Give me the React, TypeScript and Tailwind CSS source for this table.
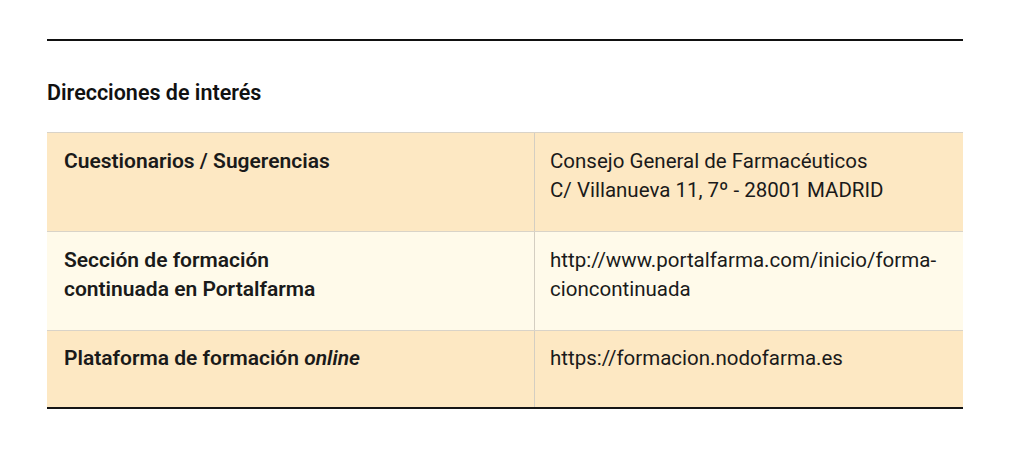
import React from "react";

const font = { fontFamily: "Roboto, 'Noto Sans', sans-serif" };

export default function App() {
  return (
    <div className="w-[1024px] h-[464px] bg-white" style={font}>
      <div className="pt-[39px] px-[47px] w-[1010px]">
        <div className="w-[916px] h-[2px] bg-[#111]" />
        <h2 className="mt-[39px] h-[26px] text-[21.5px] leading-[26px] font-semibold text-[#111]">
          Direcciones de interés
        </h2>
        <div className="mt-[26px] w-[916px] border-t border-[#d9d3c8] border-b-2 border-b-[#151515] text-[20.5px] leading-[29px] text-[#1a1a1a]">
          <div className="grid grid-cols-[488px_428px] h-[99px] bg-[#fde8c3] border-b border-[#d9d3c8]">
            <div className="pl-[17px] pt-[14px] text-[21px] font-semibold border-r border-[#d4cec2]">Cuestionarios / Sugerencias</div>
            <div className="pl-[15px] pt-[14px]">
              Consejo General de Farmacéuticos
              <br />
              C/ Villanueva 11, 7º - 28001 MADRID
            </div>
          </div>
          <div className="grid grid-cols-[488px_428px] h-[99px] bg-[#fffaea] border-b border-[#d9d3c8]">
            <div className="pl-[17px] pt-[14px] text-[21px] font-semibold border-r border-[#d4cec2]">
              Sección de formación
              <br />
              continuada en Portalfarma
            </div>
            <div className="pl-[15px] pt-[14px]">
              http://www.portalfarma.com/inicio/forma-
              <br />
              cioncontinuada
            </div>
          </div>
          <div className="grid grid-cols-[488px_428px] h-[76px] bg-[#fde8c3]">
            <div className="pl-[17px] pt-[13px] text-[21px] font-semibold border-r border-[#d4cec2]">
              Plataforma de formación <em>online</em>
            </div>
            <div className="pl-[15px] pt-[13px]">https://formacion.nodofarma.es</div>
          </div>
        </div>
      </div>
    </div>
  );
}
